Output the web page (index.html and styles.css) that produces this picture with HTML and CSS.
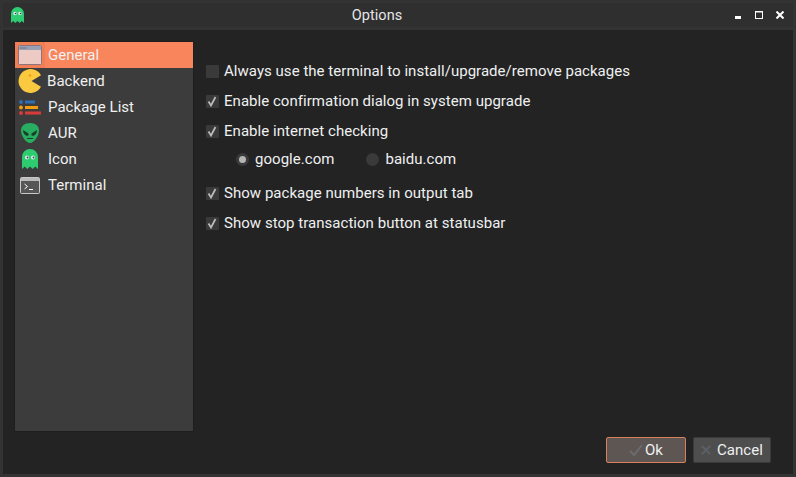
FILE: index.html
```html
<!DOCTYPE html>
<html lang="en">
<head>
<meta charset="utf-8">
<title>Options</title>
<link rel="stylesheet" href="styles.css">
</head>
<body>
<div class="window">
  <header class="titlebar">
    <div class="title-inner">
      <svg class="app-icon" width="13" height="16" viewBox="0 0 13 16"><path d="M0 16V6.500a6.500 6.500 0 0 1 13 0V16l-2.200-2-2.100 2-2.200-2-2.200 2-2.100-2z" fill="#2ecc71"/><circle cx="4" cy="6.500" r="1.700" fill="#eee"/><circle cx="9" cy="6.500" r="1.700" fill="#eee"/><circle cx="4.500" cy="6.500" r=".8" fill="#236"/><circle cx="9.500" cy="6.500" r=".8" fill="#236"/></svg>
      <span class="title">Options</span>
      <div class="win-controls">
        <svg class="ctl-min" width="6" height="8" viewBox="0 0 6 8"><rect x="0" y="5" width="6" height="3" fill="#fff"/></svg>
        <svg class="ctl-max" width="8" height="8" viewBox="0 0 8 8"><rect x=".5" y=".5" width="7" height="7" fill="none" stroke="#fff"/><rect x="0" y="0" width="8" height="1.500" fill="#fff"/></svg>
        <svg class="ctl-close" width="8" height="8" viewBox="0 0 8 8"><path d="M.5.500l7 7M7.500.500l-7 7" stroke="#fff" stroke-width="2"/></svg>
      </div>
    </div>
  </header>
  <main class="content">
    <div class="panes">
      <nav class="sidebar">
        <div class="item active">
          <span class="ico"><svg width="24" height="20" viewBox="0 0 24 20"><rect x=".5" y=".5" width="23" height="19" rx="1" fill="#edcbc4" stroke="#8f7480"/><rect x="1" y="1" width="22" height="4" fill="#98a0b5"/><rect x="2" y="2.500" width="7" height="1" fill="#6e7488"/></svg></span>
          <span class="label">General</span>
        </div>
        <div class="item">
          <span class="ico"><svg width="24" height="24" viewBox="0 0 24 24"><path d="M23 6.200A12 12 0 1 0 23 17.800L13.500 12z" fill="#fbc940"/><circle cx="12" cy="6.500" r="1.300" fill="#f39c12"/></svg></span>
          <span class="label back">Backend</span>
        </div>
        <div class="item">
          <span class="ico"><svg width="22" height="15" viewBox="0 0 22 15"><circle cx="2" cy="2" r="2" fill="#2f6db5"/><rect x="6" y=".5" width="10" height="3" fill="#2f6db5"/><circle cx="2" cy="7.500" r="2" fill="#f39c12"/><rect x="6" y="6" width="13" height="3" fill="#f39c12"/><circle cx="2" cy="13" r="2" fill="#d93a3a"/><rect x="6" y="11.500" width="16" height="3" fill="#d93a3a"/></svg></span>
          <span class="label">Package List</span>
        </div>
        <div class="item">
          <span class="ico"><svg width="18" height="20" viewBox="0 0 18 20"><path d="M9 0c5.500 0 9 3 9 7.500C18 13 13 20 9 20S0 13 0 7.500C0 3 3.500 0 9 0z" fill="#27ae60"/><path d="M2 7l5.500 3.500c.5 2-.5 2.500-2 2.200C3.500 12 2 10 2 7zM16 7l-5.500 3.500c-.5 2 .5 2.500 2 2.200C14.500 12 16 10 16 7z" fill="#173f2a"/><rect x="6" y="15" width="6" height="1" fill="#173f2a"/></svg></span>
          <span class="label">AUR</span>
        </div>
        <div class="item">
          <span class="ico"><svg width="16" height="20" viewBox="0 0 16 20"><path d="M0 20V8a8 8 0 0 1 16 0v12l-2.700-2.500-2.600 2.500L8 17.500 5.300 20l-2.600-2.500z" fill="#2ecc71"/><circle cx="5" cy="8.500" r="2" fill="#eee"/><circle cx="11" cy="8.500" r="2" fill="#eee"/><circle cx="5.500" cy="8.500" r=".9" fill="#345"/><circle cx="11.500" cy="8.500" r=".9" fill="#345"/></svg></span>
          <span class="label">Icon</span>
        </div>
        <div class="item">
          <span class="ico"><svg width="20" height="17" viewBox="0 0 20 17"><rect x=".5" y=".5" width="19" height="16" rx="1" fill="#565656" stroke="#c8c8c8"/><rect x="1" y="1" width="18" height="3" fill="#bbb"/><path d="M4.500 7l3 2.500-3 2.500" fill="none" stroke="#fff"/><rect x="9" y="12" width="4" height="1" fill="#fff"/></svg></span>
          <span class="label">Terminal</span>
        </div>
      </nav>
      <section class="settings">
        <label class="check"><span class="box"></span>Always use the terminal to install/upgrade/remove packages</label>
        <label class="check"><span class="box"><svg width="13" height="13" viewBox="0 0 13 13"><path d="M2.500 6.500l2.500 4L9.500 2" fill="none" stroke="#bdbdbd" stroke-width="1.700"/></svg></span>Enable confirmation dialog in system upgrade</label>
        <label class="check"><span class="box"><svg width="13" height="13" viewBox="0 0 13 13"><path d="M2.500 6.500l2.500 4L9.500 2" fill="none" stroke="#bdbdbd" stroke-width="1.700"/></svg></span>Enable internet checking</label>
        <div class="radios">
          <label class="radio"><span class="dot on"></span>google.com</label>
          <label class="radio"><span class="dot"></span>baidu.com</label>
        </div>
        <label class="check"><span class="box"><svg width="13" height="13" viewBox="0 0 13 13"><path d="M2.500 6.500l2.500 4L9.500 2" fill="none" stroke="#bdbdbd" stroke-width="1.700"/></svg></span>Show package numbers in output tab</label>
        <label class="check"><span class="box"><svg width="13" height="13" viewBox="0 0 13 13"><path d="M2.500 6.500l2.500 4L9.500 2" fill="none" stroke="#bdbdbd" stroke-width="1.700"/></svg></span>Show stop transaction button at statusbar</label>
      </section>
    </div>
    <footer class="buttons">
      <button class="btn ok"><svg width="14" height="12" viewBox="0 0 14 12"><path d="M1 7l4 4 8-10" fill="none" stroke="#6b6b72" stroke-width="2"/></svg><span>Ok</span></button>
      <button class="btn cancel"><svg width="10" height="10" viewBox="0 0 10 10"><path d="M1 1l8 8M9 1l-8 8" stroke="#5d5f68" stroke-width="2"/></svg><span>Cancel</span></button>
    </footer>
  </main>
</div>
</body>
</html>
```
FILE: styles.css
```css
* { box-sizing: border-box; }
html, body { margin: 0; height: 100%; }
body { font-family: Roboto, sans-serif; font-size: 15px; letter-spacing: .035px; color: #eff0f1; background: #333; overflow: hidden; }
.window { width: 796px; height: 477px; display: flex; flex-direction: column; padding: 3px; background: #333; }
.titlebar { height: 27px; flex: none; padding-bottom: 3px; }
.title-inner { height: 24px; background: #2f2f2f; display: flex; align-items: center; position: relative; padding-left: 8px; }
.title { position: absolute; left: 0; right: 42px; text-align: center; font-size: 14.5px; color: #e6e6e6; }
.win-controls { margin-left: auto; display: flex; align-items: flex-start; padding-right: 9px; position: relative; }
.ctl-max { margin-left: 14px; }
.ctl-close { margin-left: 13px; }
.content { flex: 1; background: #232323; display: flex; flex-direction: column; padding: 12px 12px 0; min-height: 0; }
.panes { display: flex; height: 389px; }
.sidebar { width: 178px; flex: none; background: #3c3c3c; box-shadow: 0 0 0 1px #1e1e1e; }
.item { height: 26px; display: flex; align-items: center; }
.item.active { background: #f8855b; }
.ico { width: 30px; height: 26px; display: flex; justify-content: center; align-items: center; flex: none; margin-right: 3px; }
.active .ico { background: #f07f56; }
.label { line-height: 26px; }
.label.back { margin-left: -1px; }
.settings { padding: 14px 0 0 13px; display: flex; flex-direction: column; }
.check { height: 30px; display: flex; align-items: center; gap: 5px; }
.box { width: 13px; height: 13px; background: #3a3a3a; border-radius: 1px; display: block; flex: none; }
.box svg { display: block; }
.radios { display: flex; height: 26px; padding-left: 30px; gap: 32px; margin-bottom: 6px; }
.radio { display: flex; align-items: center; gap: 6px; }
.dot { width: 13px; height: 13px; border-radius: 50%; background: #3a3a3a; display: flex; align-items: center; justify-content: center; }
.dot.on::after { content: ""; width: 7px; height: 7px; border-radius: 50%; background: #b5b5b5; }
.buttons { flex: 1; display: flex; justify-content: flex-end; align-items: flex-start; gap: 7px; padding: 6px 10px 0 0; }
.btn { height: 26px; font: inherit; letter-spacing: inherit; color: #eff0f1; border-radius: 2px; display: flex; align-items: center; justify-content: center; gap: 2px; padding: 0; }
.ok { width: 80px; background: #5e5653; border: 1px solid #d9805a; }
.cancel { width: 78px; background: #4e4e4e; border: 1px solid #3a3a3a; gap: 6px; }
```
